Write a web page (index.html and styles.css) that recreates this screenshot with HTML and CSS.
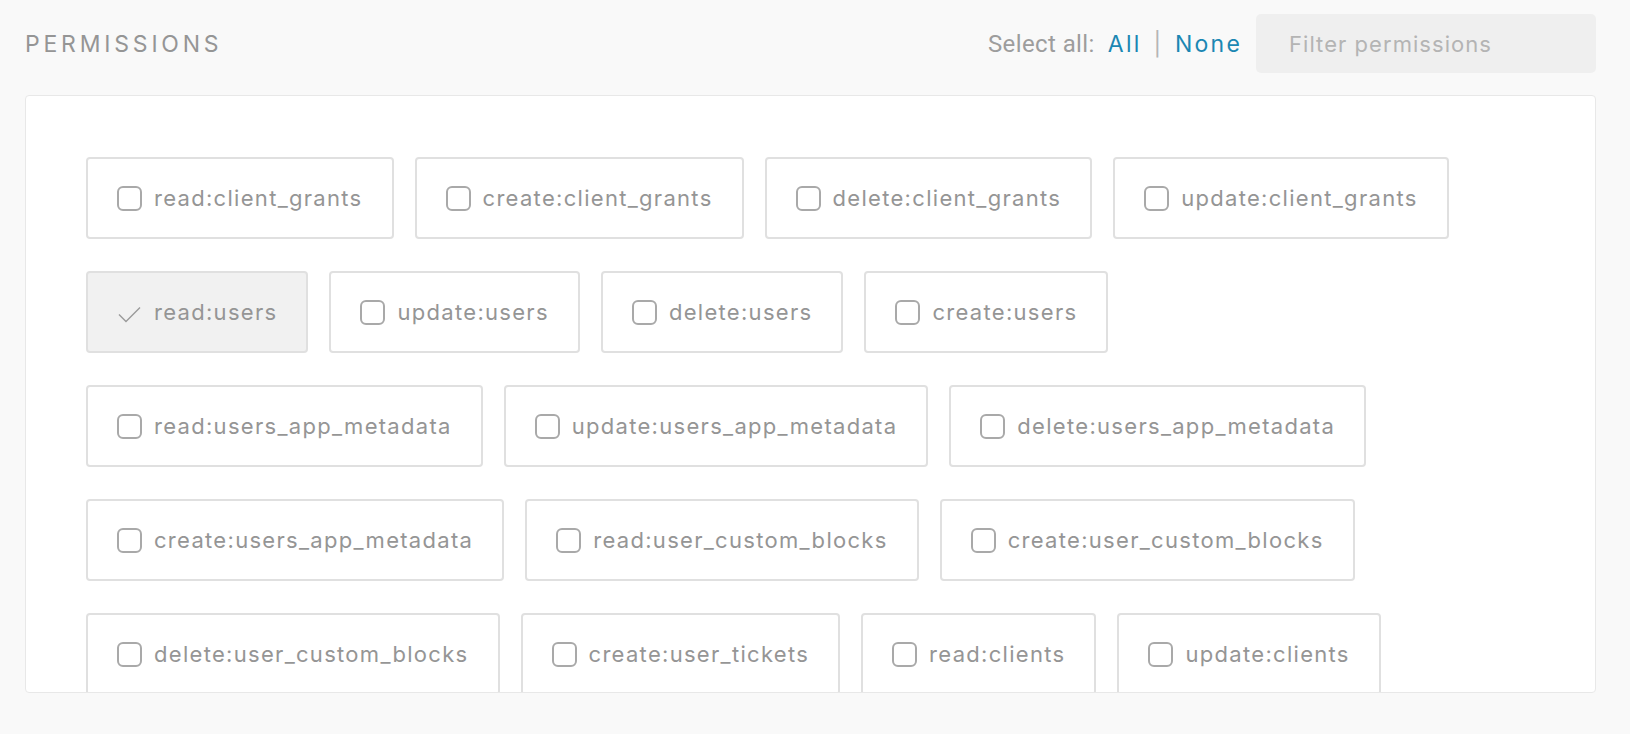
FILE: index.html
```html
<!DOCTYPE html>
<html>
<head>
<meta charset="utf-8">
<link rel="stylesheet" href="styles.css">
</head>
<body>
<div class="header">
  <h2 class="title">PERMISSIONS</h2>
  <div class="controls">
    <span class="select-label">Select all:</span>
    <a class="link">All</a>
    <span class="sep">|</span>
    <a class="link">None</a>
    <input class="filter" type="text" placeholder="Filter permissions">
  </div>
</div>
<div class="panel">
  <div class="chips">
    <label class="chip"><span class="box"></span><span class="name">read:client_grants</span></label>
    <label class="chip"><span class="box"></span><span class="name">create:client_grants</span></label>
    <label class="chip"><span class="box"></span><span class="name">delete:client_grants</span></label>
    <label class="chip"><span class="box"></span><span class="name">update:client_grants</span></label>
    <label class="chip checked"><svg class="check" viewBox="0 0 25 25" width="25" height="25"><path d="M2 14.5 L9 21.5 L23 7.5" fill="none" stroke="#9a9a9a" stroke-width="1.4"/></svg><span class="name">read:users</span></label>
    <label class="chip"><span class="box"></span><span class="name">update:users</span></label>
    <label class="chip"><span class="box"></span><span class="name">delete:users</span></label>
    <label class="chip"><span class="box"></span><span class="name">create:users</span></label>
    <label class="chip"><span class="box"></span><span class="name">read:users_app_metadata</span></label>
    <label class="chip"><span class="box"></span><span class="name">update:users_app_metadata</span></label>
    <label class="chip"><span class="box"></span><span class="name">delete:users_app_metadata</span></label>
    <label class="chip"><span class="box"></span><span class="name">create:users_app_metadata</span></label>
    <label class="chip"><span class="box"></span><span class="name">read:user_custom_blocks</span></label>
    <label class="chip"><span class="box"></span><span class="name">create:user_custom_blocks</span></label>
    <label class="chip"><span class="box"></span><span class="name">delete:user_custom_blocks</span></label>
    <label class="chip"><span class="box"></span><span class="name">create:user_tickets</span></label>
    <label class="chip"><span class="box"></span><span class="name">read:clients</span></label>
    <label class="chip"><span class="box"></span><span class="name">update:clients</span></label>
    <label class="chip"><span class="box"></span><span class="name">delete:clients</span></label>
    <label class="chip"><span class="box"></span><span class="name">create:clients</span></label>
  </div>
</div>
</body>
</html>
```
FILE: styles.css
```css
* { box-sizing: border-box; }
html, body {
  margin: 0;
  background: #f9f9f9;
  font-family: Inter, "Noto Sans", sans-serif;
  color: #959595;
}
.header {
  display: flex;
  align-items: center;
  justify-content: space-between;
  padding: 14px 34px 0 25px;
  height: 73px;
}
.title {
  margin: 0;
  font-size: 23px;
  font-weight: 400;
  letter-spacing: 3.8px;
  color: #959595;
}
.controls {
  display: flex;
  align-items: center;
  height: 59px;
}
.select-label {
  font-family: Roboto, sans-serif;
  font-size: 24px;
  letter-spacing: 0.4px;
  color: #9d9d9d;
  margin-right: 13px;
}
.link {
  color: #1b87b3;
  font-size: 23px;
  letter-spacing: 2.2px;
  cursor: pointer;
}
.sep {
  color: #b5b5b5;
  font-size: 23px;
  margin: 0 14px 0 12px;
}
.filter {
  margin-left: 14px;
  width: 340px;
  height: 59px;
  border: none;
  border-radius: 5px;
  background: #efefef;
  padding: 0 0 0 33px;
  font-family: Inter, sans-serif;
  font-size: 22px;
  letter-spacing: 1.05px;
  color: #666;
  outline: none;
}
.filter::placeholder { color: #b4b4b4; }
.panel {
  margin: 22px 34px 0 25px;
  height: 598px;
  background: #fff;
  border: 1px solid #e8e8e8;
  border-radius: 4px;
  overflow: hidden;
}
.chips {
  display: flex;
  flex-wrap: wrap;
  column-gap: 21px;
  row-gap: 32px;
  padding: 61px 115px 61px 60px;
}
.chip {
  display: flex;
  align-items: center;
  height: 82px;
  padding: 0 29px;
  border: 2px solid #e0e0e0;
  border-radius: 4px;
  background: #fff;
  font-size: 22px;
  letter-spacing: 1.3px;
  color: #959595;
  cursor: pointer;
}
.chip.checked { background: #f1f1f1; }
.box {
  width: 25px;
  height: 25px;
  border: 2px solid #a9a9a9;
  border-radius: 6px;
  margin-right: 12px;
  flex: none;
}
.check {
  margin-right: 12px;
  flex: none;
}
.name { white-space: nowrap; }
```
